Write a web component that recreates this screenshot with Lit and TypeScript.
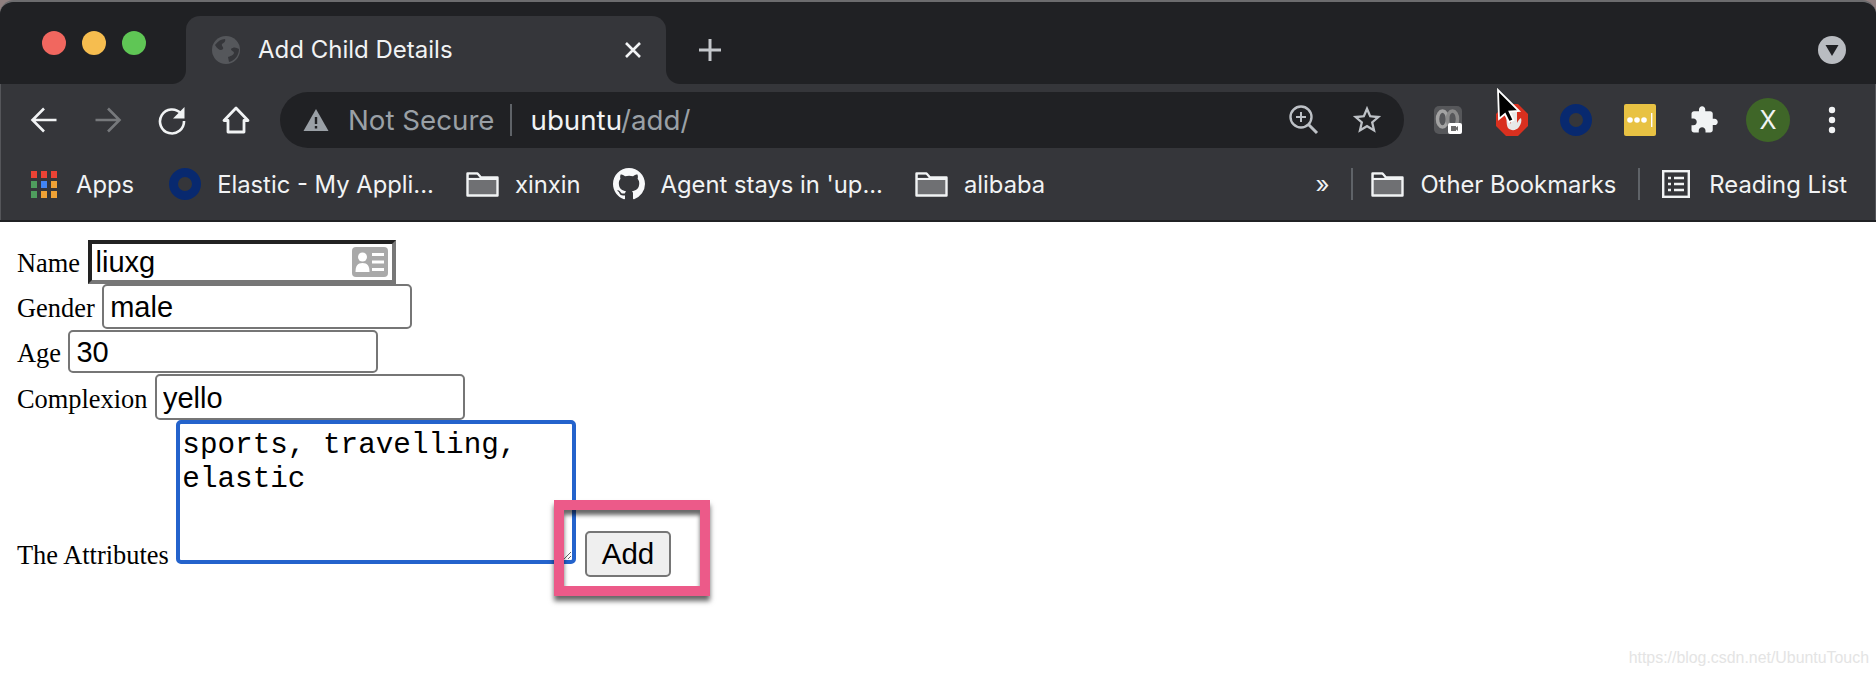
import { LitElement, css, html } from "lit";
import { customElement } from "lit/decorators.js";

const folder = html`<svg class="folder" viewBox="0 0 33 25"><path d="M1.5 23.5V1.5h10l3.5 4h16.500v18z" fill="#6f7073" stroke="#f1f3f4" stroke-width="2.4" stroke-linejoin="round"/><path d="M1.5 7h30" stroke="#f1f3f4" stroke-width="2"/><path d="M3 2.7h8l2.4 3H3z" fill="#35363a"/></svg>`;

const ring = html`<svg class="ring" viewBox="0 0 32 32"><circle cx="16" cy="16" r="11.5" fill="none" stroke="#08296f" stroke-width="9"/></svg>`;

const appColors = ["#ea4335", "#ea4335", "#ea4335", "#4f9d5d", "#4285f4", "#eea236", "#4f9d5d", "#eea236", "#eea236"];

@customElement("app-root")
export class AppRoot extends LitElement {
  static styles = css`
    :host {
      display: block;
      position: relative;
      width: 1876px;
      height: 676px;
      overflow: hidden;
      background: #fff;
    }
    .shell {
      background: #8f7f7f;
    }
    .chrome {
      background: #35363a;
      border-radius: 14px 14px 0 0;
      border-top: 2px solid #6c6c6e;
      box-shadow: inset 1px 0 0 #55565a, inset -1px 0 0 #55565a;
      font-family: Inter, "Liberation Sans", sans-serif;
      color: #f1f3f4;
      overflow: hidden;
    }

    /* tab strip */
    .strip {
      height: 82px;
      background: #202124;
      display: flex;
      align-items: flex-end;
      border-radius: 12px 12px 0 0;
      position: relative;
    }
    .lights {
      display: flex;
      gap: 16px;
      margin: 0 40px 29px 42px;
      align-self: flex-end;
    }
    .lights i {
      width: 24px;
      height: 24px;
      border-radius: 50%;
    }
    .tab {
      position: relative;
      width: 480px;
      height: 68px;
      background: #35363a;
      border-radius: 14px 14px 0 0;
      display: flex;
      align-items: center;
      padding: 0 24px 0 26px;
      box-sizing: border-box;
      font-size: 24px;
    }
    .tab::before,
    .tab::after {
      content: "";
      position: absolute;
      bottom: 0;
      width: 14px;
      height: 14px;
    }
    .tab::before {
      left: -14px;
      background: radial-gradient(circle at 0 0, #202124 13.5px, #35363a 14.5px);
    }
    .tab::after {
      right: -14px;
      background: radial-gradient(circle at 100% 0, #202124 13.5px, #35363a 14.5px);
    }
    .tab-title {
      margin: -2px 0 0 18px;
      flex: 1;
      white-space: nowrap;
    }
    .plus {
      margin: 0 0 22px 32px;
    }
    .caret {
      margin: 0 30px 20px auto;
    }

    /* toolbar */
    .toolbar {
      height: 72px;
      display: flex;
      align-items: center;
      padding: 0 12px;
      box-sizing: border-box;
    }
    .btn {
      width: 64px;
      height: 56px;
      display: flex;
      align-items: center;
      justify-content: center;
      flex: none;
      position: relative;
    }
    .omnibox {
      flex: 1;
      height: 56px;
      margin: 0 12px;
      background: #202124;
      border-radius: 28px;
      display: flex;
      align-items: center;
      padding: 0 0 0 23px;
      font-size: 27.7px;
    }
    .not-secure {
      color: #9aa0a6;
      margin-left: 19px;
    }
    .sep {
      width: 2px;
      height: 32px;
      background: #5f6368;
      margin: 0 19px 0 15px;
    }
    .host {
      color: #f1f3f4;
    }
    .path {
      color: #9aa0a6;
    }
    .omni-end {
      margin-left: auto;
      display: flex;
      align-items: center;
      gap: 30px;
      padding-right: 20px;
    }
    .yellow {
      width: 32px;
      height: 32px;
      border-radius: 2px;
      background: #e8c243;
      display: flex;
      align-items: center;
      justify-content: center;
    }
    .avatar {
      width: 44px;
      height: 44px;
      border-radius: 50%;
      background: #3f6628;
      color: #f1f3f4;
      font-size: 25px;
      display: flex;
      align-items: center;
      justify-content: center;
    }

    /* bookmarks */
    .bookmarks {
      height: 56px;
      display: flex;
      align-items: center;
      gap: 32px;
      padding: 0 29px 8px 31px;
      border-bottom: 2px solid #202124;
      font-size: 23.8px;
      white-space: nowrap;
    }
    .bm {
      display: flex;
      align-items: center;
      gap: 16px;
    }
    .bm-apps {
      margin-right: 3px;
    }
    .bm-right {
      margin-left: auto;
      display: flex;
      align-items: center;
      gap: 22px;
    }
    .other {
      margin-left: -4px;
    }
    .reading {
      gap: 19px;
    }
    .apps {
      display: grid;
      grid-template-columns: repeat(3, 6px);
      grid-auto-rows: 7px;
      gap: 3px 4px;
      margin-right: 3px;
    }
    .apps i {
      display: block;
    }
    .folder {
      width: 33px;
      height: 25px;
      flex: none;
    }
    .ring {
      width: 32px;
      height: 32px;
      flex: none;
    }
    .vbar {
      width: 2px;
      height: 32px;
      background: #5f6368;
    }
    .chev {
      font-size: 24px;
    }

    /* form */
    .page {
      font-family: "Liberation Serif", serif;
      font-size: 26.4px;
      color: #000;
      padding: 18px 0 0 17px;
    }
    .row {
      display: flex;
      align-items: baseline;
      gap: 7.5px;
    }
    .field {
      position: relative;
      display: flex;
    }
    input {
      width: 310px;
      height: 44px;
      box-sizing: border-box;
      border: 2px solid #767676;
      border-radius: 5px;
      padding: 2px 6px 0;
      font-family: "Liberation Sans", sans-serif;
      font-size: 29px;
      background: #fff;
      color: #000;
      outline: none;
    }
    input.focused {
      width: 308px;
      border: 4px solid;
      border-color: #222 #777 #777 #222;
      border-radius: 0;
      padding: 0 4px;
    }
    input.gender {
      height: 45px;
      margin-bottom: 1px;
    }
    input.age {
      height: 43px;
      margin-bottom: 1px;
    }
    input.complexion {
      height: 46px;
    }
    .contact {
      position: absolute;
      left: 264px;
      top: 7px;
      width: 36px;
      height: 30px;
    }
    .last {
      display: block;
    }
    textarea {
      width: 400px;
      height: 144px;
      box-sizing: border-box;
      border: 4px solid #2463cc;
      border-radius: 5px;
      margin: 0 0 0 1px;
      padding: 5px 2px 0;
      font-family: "Liberation Mono", monospace;
      font-size: 29.3px;
      line-height: 34px;
      color: #000;
      outline: none;
    }
    button {
      width: 86px;
      height: 46px;
      box-sizing: border-box;
      margin-left: 2px;
      background: #efefef;
      border: 2px solid #767676;
      border-radius: 5px;
      font-family: "Liberation Sans", sans-serif;
      font-size: 29.5px;
      color: #000;
      padding: 0;
    }
    .highlight {
      position: absolute;
      left: 554px;
      top: 500px;
      width: 156px;
      height: 96px;
      box-sizing: border-box;
      border: 10px solid #ec5a89;
      box-shadow: 0 5px 5px rgba(0, 0, 0, 0.6), inset 0 5px 4px rgba(0, 0, 0, 0.6);
    }
    .watermark {
      position: absolute;
      right: 7px;
      bottom: 9px;
      font-family: "Liberation Sans", sans-serif;
      font-size: 15.9px;
      color: #e4e4e4;
    }
    .cursor {
      position: absolute;
      left: 1495px;
      top: 87px;
      width: 32px;
      height: 44px;
    }
  `;

  render() {
    return html`
      <div class="shell">
        <div class="chrome">
          <div class="strip">
            <div class="lights">
              <i style="background:#f1675f"></i>
              <i style="background:#f6bd4f"></i>
              <i style="background:#5fc655"></i>
            </div>
            <div class="tab">
              <svg width="28" height="28" viewBox="0 0 28 28">
                <circle cx="14" cy="14" r="14" fill="#55575b" />
                <path d="M3 9c3-4 6-6 10-6 1 2-1 4-3 5-1 2 2 3 1 5-2 2-5 1-8-4zM27 13c-3-2-6-2-8 0 0 2 3 2 3 4-1 3-4 3-6 4l1 5c5-1 10-6 10-13z" fill="#35363a" />
              </svg>
              <span class="tab-title">Add Child Details</span>
              <svg width="18" height="18" viewBox="0 0 18 18"><path d="M2 2l14 14M16 2L2 16" stroke="#f1f3f4" stroke-width="2.6" /></svg>
            </div>
            <svg class="plus" width="24" height="24" viewBox="0 0 24 24"><path d="M12 1v22M1 12h22" stroke="#c4c7cb" stroke-width="3" /></svg>
            <svg class="caret" width="28" height="28" viewBox="0 0 28 28">
              <circle cx="14" cy="14" r="14" fill="#b9bcc1" />
              <path d="M7.5 9h13L14 20z" fill="#202124" />
            </svg>
          </div>

          <div class="toolbar">
            <div class="btn">
              <svg width="28" height="28" viewBox="0 0 28 28"><path d="M26.5 14H3M14 2.5L2.5 14 14 25.5" fill="none" stroke="#f1f3f4" stroke-width="2.6" /></svg>
            </div>
            <div class="btn">
              <svg width="28" height="28" viewBox="0 0 28 28"><path d="M1.5 14H25M14 2.5L25.5 14 14 25.5" fill="none" stroke="#77797c" stroke-width="2.6" /></svg>
            </div>
            <div class="btn">
              <svg width="30" height="30" viewBox="0 0 30 30">
                <path d="M24 8.5A12 12 0 1 0 27 16" fill="none" stroke="#f1f3f4" stroke-width="2.6" />
                <path d="M27.5 2v11.5H16z" fill="#f1f3f4" />
              </svg>
            </div>
            <div class="btn">
              <svg width="28" height="28" viewBox="0 0 28 28"><path d="M14 2L2 14.5h4V26h16V14.5h4z" fill="none" stroke="#f1f3f4" stroke-width="2.8" stroke-linejoin="round" /></svg>
            </div>
            <div class="omnibox">
              <svg width="26" height="24" viewBox="0 0 26 24">
                <path d="M13 1l12.5 22H.5z" fill="#9aa0a6" />
                <path d="M11.8 9h2.4v7h-2.4zM11.8 18h2.4v2.4h-2.4z" fill="#202124" />
              </svg>
              <span class="not-secure">Not Secure</span>
              <span class="sep"></span>
              <span><span class="host">ubuntu</span><span class="path">/add/</span></span>
              <div class="omni-end">
                <svg width="32" height="32" viewBox="0 0 32 32">
                  <circle cx="13" cy="13" r="10.5" fill="none" stroke="#bdc1c6" stroke-width="2.4" />
                  <path d="M20.5 20.5L29 29" stroke="#bdc1c6" stroke-width="3" />
                  <path d="M13 8v10M8 13h10" stroke="#bdc1c6" stroke-width="2" />
                </svg>
                <svg width="34" height="34" viewBox="0 0 24 24"><path fill="#bdc1c6" d="M22 9.24l-7.19-.62L12 2 9.19 8.63 2 9.24l5.46 4.73L5.82 21 12 17.27 18.18 21l-1.63-7.03L22 9.24zM12 15.4l-3.76 2.27 1-4.28-3.32-2.88 4.38-.38L12 6.1l1.71 4.04 4.38.38-3.32 2.88 1 4.28L12 15.4z" /></svg>
              </div>
            </div>
            <div class="btn">
              <svg width="28" height="28" viewBox="0 0 28 28">
                <rect width="28" height="28" rx="5" fill="#56575a" />
                <ellipse cx="8.5" cy="13" rx="5" ry="8" fill="none" stroke="#a3a3a3" stroke-width="3.5" />
                <ellipse cx="18.5" cy="13" rx="5" ry="8" fill="none" stroke="#8a8a8a" stroke-width="3.5" />
                <rect x="14" y="17" width="14" height="11" rx="2" fill="#fff" />
                <path d="M17 20h5v5h-5zM22 21.5l2-1.5v5l-2-1.5z" fill="#6b6b6b" />
              </svg>
            </div>
            <div class="btn">
              <svg width="32" height="32" viewBox="0 0 32 32">
                <path d="M10 0h12l10 10v12L22 32H10L0 22V10z" fill="#d9301f" />
                <path d="M10 10c1 6 0 10 2 14 3 3 8 3 11-1 2-3 3-6 2-9-2 1-3 3-4 5V6h-6v14z" fill="#e8e8e8" />
              </svg>
            </div>
            <div class="btn">${ring}</div>
            <div class="btn">
              <div class="yellow">
                <svg width="28" height="16" viewBox="0 0 28 16">
                  <circle cx="4" cy="8" r="2.8" fill="#fff" />
                  <circle cx="11" cy="8" r="2.8" fill="#fff" />
                  <circle cx="18" cy="8" r="2.8" fill="#fff" />
                  <rect x="25" y="1" width="1.4" height="14" fill="#fff" />
                </svg>
              </div>
            </div>
            <div class="btn">
              <svg width="30" height="30" viewBox="0 0 24 24"><path fill="#f1f3f4" d="M20.5 11H19V7c0-1.1-.9-2-2-2h-4V3.5C13 2.12 11.88 1 10.5 1S8 2.12 8 3.5V5H4c-1.1 0-1.99.9-1.99 2v3.8H3.5c1.49 0 2.7 1.21 2.7 2.7s-1.21 2.7-2.7 2.7H2V20c0 1.1.9 2 2 2h3.8v-1.5c0-1.49 1.21-2.7 2.7-2.7 1.49 0 2.7 1.21 2.7 2.7V22H17c1.1 0 2-.9 2-2v-4h1.5c1.38 0 2.5-1.12 2.5-2.5S21.88 11 20.5 11z" /></svg>
            </div>
            <div class="btn"><div class="avatar">X</div></div>
            <div class="btn">
              <svg width="8" height="28" viewBox="0 0 8 28">
                <circle cx="4" cy="4" r="3.2" fill="#f1f3f4" />
                <circle cx="4" cy="14" r="3.2" fill="#f1f3f4" />
                <circle cx="4" cy="24" r="3.2" fill="#f1f3f4" />
              </svg>
            </div>
          </div>

          <div class="bookmarks">
            <div class="bm bm-apps">
              <div class="apps">${appColors.map((c) => html`<i style="background:${c}"></i>`)}</div>
              <span>Apps</span>
            </div>
            <div class="bm">${ring}<span>Elastic - My Appli...</span></div>
            <div class="bm">${folder}<span>xinxin</span></div>
            <div class="bm">
              <svg width="32" height="32" viewBox="0 0 16 16"><path fill="#f8f9fa" d="M8 0C3.58 0 0 3.58 0 8c0 3.54 2.29 6.53 5.47 7.59.4.07.55-.17.55-.38 0-.19-.01-.82-.01-1.49-2.01.37-2.53-.49-2.69-.94-.09-.23-.48-.94-.82-1.13-.28-.15-.68-.52-.01-.53.63-.01 1.08.58 1.23.82.72 1.21 1.87.87 2.33.66.07-.52.28-.87.51-1.07-1.78-.2-3.64-.89-3.64-3.95 0-.87.31-1.59.82-2.15-.08-.2-.36-1.02.08-2.12 0 0 .67-.21 2.2.82.64-.18 1.32-.27 2-.27.68 0 1.36.09 2 .27 1.53-1.04 2.2-.82 2.2-.82.44 1.1.16 1.92.08 2.12.51.56.82 1.27.82 2.15 0 3.07-1.87 3.75-3.65 3.95.29.25.54.73.54 1.48 0 1.07-.01 1.93-.01 2.2 0 .21.15.46.55.38A8.013 8.013 0 0016 8c0-4.42-3.58-8-8-8z" /></svg>
              <span>Agent stays in 'up...</span>
            </div>
            <div class="bm">${folder}<span>alibaba</span></div>
            <div class="bm-right">
              <span class="chev">»</span>
              <span class="vbar"></span>
              <div class="bm other">${folder}<span>Other Bookmarks</span></div>
              <span class="vbar"></span>
              <div class="bm reading">
                <svg width="28" height="28" viewBox="0 0 28 28">
                  <rect x="1.2" y="1.2" width="25.6" height="25.6" fill="none" stroke="#f1f3f4" stroke-width="2.4" />
                  <path d="M6 8h3M12 8h10M6 14h3M12 14h10M6 20h3M12 20h10" stroke="#f1f3f4" stroke-width="2.4" />
                </svg>
                <span>Reading List</span>
              </div>
            </div>
          </div>
        </div>
      </div>

      <form class="page">
        <div class="row">
          <label>Name</label>
          <div class="field">
            <input class="focused" value="liuxg" />
            <svg class="contact" viewBox="0 0 36 30">
              <rect width="36" height="30" rx="4" fill="#a9a9a9" />
              <circle cx="10.5" cy="10" r="4.5" fill="#fff" />
              <path d="M3.5 25c0-6 2-9 7-9s7 3 7 9z" fill="#fff" />
              <path d="M20 6h12v3H20zM20 13.5h12v3H20zM20 21h12v3H20z" fill="#fff" />
            </svg>
          </div>
        </div>
        <div class="row">
          <label>Gender</label>
          <input class="gender" value="male" />
        </div>
        <div class="row">
          <label>Age</label>
          <input class="age" value="30" />
        </div>
        <div class="row">
          <label>Complexion</label>
          <input class="complexion" value="yello" />
        </div>
        <div class="row last">
          <label>The Attributes</label>
          <textarea .value=${"sports, travelling, elastic"}></textarea>
          <button type="button">Add</button>
        </div>
      </form>

      <div class="highlight"></div>
      <div class="watermark">https://blog.csdn.net/UbuntuTouch</div>
      <svg class="cursor" viewBox="0 0 32 44">
        <path d="M3 3l1 29 6-5 4 8 4.5-2-4-8.500 9.500-.5z" fill="#000" stroke="#fff" stroke-width="1.8" />
      </svg>
    `;
  }
}
